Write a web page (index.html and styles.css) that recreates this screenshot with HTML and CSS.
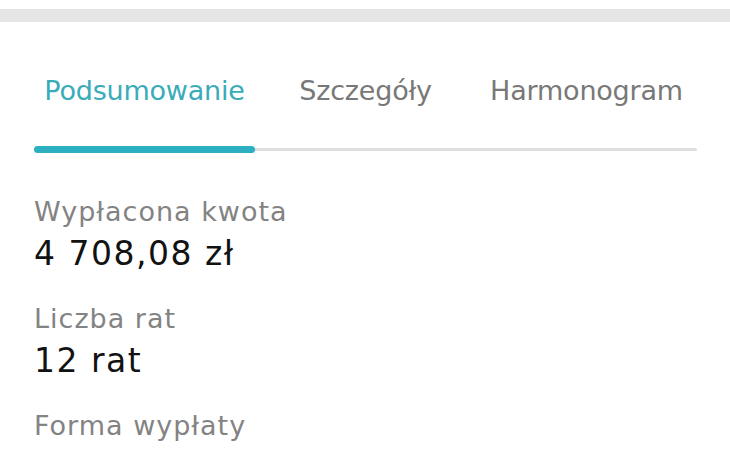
FILE: index.html
```html
<!DOCTYPE html>
<html lang="pl">
<head>
<meta charset="utf-8">
<title>Podsumowanie</title>
<link rel="stylesheet" href="styles.css">
</head>
<body>
  <div class="topbar"></div>
  <main class="panel">
    <nav class="tabs">
      <div class="tab tab--active">Podsumowanie</div>
      <div class="tab">Szczegóły</div>
      <div class="tab">Harmonogram</div>
    </nav>
    <div class="indicator">
      <div class="indicator__track"></div>
      <div class="indicator__bar"></div>
    </div>
    <section class="details">
      <div class="item">
        <div class="item__label">Wypłacona kwota</div>
        <div class="item__value">4 708,08 zł</div>
      </div>
      <div class="item">
        <div class="item__label">Liczba rat</div>
        <div class="item__value">12 rat</div>
      </div>
      <div class="item">
        <div class="item__label">Forma wypłaty</div>
      </div>
    </section>
  </main>
</body>
</html>
```

FILE: styles.css
```css
html, body {
  margin: 0;
  padding: 0;
  background: #ffffff;
  overflow: hidden;
}

body {
  font-family: "DejaVu Sans", "Noto Sans", sans-serif;
  width: 730px;
  height: 456px;
}

.topbar {
  margin-top: 9px;
  height: 13px;
  background: #e6e6e6;
}

.panel {
  padding: 0 33px 0 34px;
}

.tabs {
  display: grid;
  grid-template-columns: repeat(3, 1fr);
  margin-top: 51px;
}

.tab {
  text-align: center;
  font-size: 27px;
  line-height: 36px;
  color: #787878;
  letter-spacing: -0.2px;
  white-space: nowrap;
}

.tab--active {
  color: #3aabb9;
}

.indicator {
  position: relative;
  margin-top: 37px;
  height: 7px;
  display: flex;
  align-items: center;
}

.indicator__track {
  flex: 1;
  height: 3px;
  background: #dedede;
  border-radius: 2px;
}

.indicator__bar {
  position: absolute;
  left: 0;
  top: 0;
  width: 33.333%;
  height: 7px;
  border-radius: 4px;
  background: #2bafc1;
}

.details {
  padding-top: 43px;
  display: flex;
  flex-direction: column;
  gap: 30px;
}

.item {
  display: flex;
  flex-direction: column;
  gap: 7px;
}

.item__label {
  font-size: 27px;
  line-height: 32px;
  letter-spacing: 1px;
  color: #838383;
  white-space: nowrap;
}

.item__value {
  font-size: 33px;
  line-height: 38px;
  letter-spacing: 1.5px;
  color: #121212;
  white-space: nowrap;
}
```
